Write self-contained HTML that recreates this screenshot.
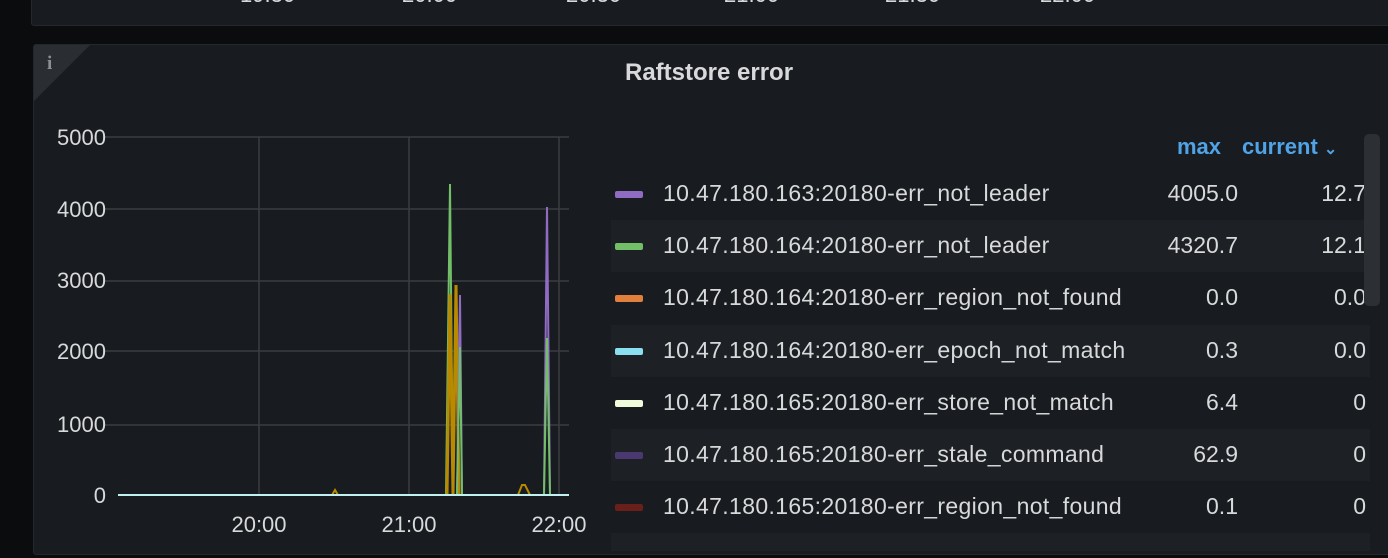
<!DOCTYPE html>
<html><head><meta charset="utf-8"><style>
*{margin:0;padding:0;box-sizing:border-box}
html,body{width:1388px;height:558px;overflow:hidden}
body{background:#0b0c0e;position:relative;font-family:"Liberation Sans",sans-serif;color:#ccccdc}
.p{position:absolute;background:#181b1f;border:1px solid #24272c;border-radius:3px}
.t{position:absolute;font-size:22px;color:#d8d9da}
.row{position:absolute;left:611px;width:759px;height:52px}
.row .sw{position:absolute;left:4px;top:23px;width:28px;height:7px;border-radius:2px}
.row .n{position:absolute;left:52px;top:12px;font-size:23px;letter-spacing:0.35px;color:#d8d9da;white-space:nowrap}
.row .m{position:absolute;right:132px;top:12px;font-size:23px;color:#d8d9da}
.row .c{position:absolute;right:4px;top:12px;font-size:23px;color:#d8d9da}
.alt{background:#1d2024}
</style></head><body>
<div class="p" style="left:31px;top:-10px;width:1362px;height:36px;overflow:hidden">
<span class="t" style="left:208px;top:-9px">19:30</span>
<span class="t" style="left:370px;top:-9px">20:00</span>
<span class="t" style="left:534px;top:-9px">20:30</span>
<span class="t" style="left:692px;top:-9px">21:00</span>
<span class="t" style="left:853px;top:-9px">21:30</span>
<span class="t" style="left:1008px;top:-9px">22:00</span>
</div>
<div class="p" style="left:33px;top:44px;width:1360px;height:511px;overflow:hidden">
<div style="position:absolute;left:0;top:0;width:0;height:0;border-top:56px solid #2a2d32;border-right:56px solid transparent"></div>
<div style="position:absolute;left:13px;top:8px;font-size:19px;font-weight:bold;color:#8e8e93;font-family:'Liberation Serif',serif">i</div>
<div style="position:absolute;left:591px;top:14px;font-size:24px;font-weight:bold;color:#d8d9da">Raftstore error</div>
</div>
<svg style="position:absolute;left:0;top:0" width="1388" height="558">
<g stroke="#3a3c40" stroke-width="1.5">
<line x1="104" y1="137" x2="569" y2="137"/><line x1="104" y1="209" x2="569" y2="209"/>
<line x1="104" y1="281" x2="569" y2="281"/><line x1="104" y1="351" x2="569" y2="351"/>
<line x1="104" y1="425" x2="569" y2="425"/>
<line x1="259" y1="137" x2="259" y2="495"/><line x1="409" y1="137" x2="409" y2="495"/><line x1="559" y1="137" x2="559" y2="495"/>
</g>
<g fill="none" stroke-width="2">
<path d="M446 495 L450 184 L453 495" stroke="#73bf69"/>
<path d="M447 495 L450 294 L453 495" stroke="#b88a00" stroke-width="3"/>
<path d="M453 495 L456 285 L459 495" stroke="#b88a00" stroke-width="3"/>
<path d="M457 495 L460 295 L462 495" stroke="#8f6bc4"/>
<path d="M457 495 L460 347 L462 495" stroke="#73bf69"/>
<path d="M544 495 L547 207 L550 495" stroke="#8f6bc4"/>
<path d="M544 495 L547 338 L550 495" stroke="#73bf69"/>
<path d="M518 495 L522 485 L525 485 L530 495" stroke="#b88a00"/>
<path d="M332 495 L335 490 L338 495" stroke="#b88a00"/>
</g>
<line x1="118" y1="495" x2="569" y2="495" stroke="#c0f0f0" stroke-width="2"/>
<g font-size="22" fill="#d8d9da" font-family="Liberation Sans" text-anchor="end">
<text x="106" y="145">5000</text><text x="106" y="217">4000</text><text x="106" y="288">3000</text>
<text x="106" y="359">2000</text><text x="106" y="432">1000</text><text x="106" y="503">0</text>
</g>
<g font-size="22" fill="#d8d9da" font-family="Liberation Sans" text-anchor="middle">
<text x="259" y="532">20:00</text><text x="409" y="532">21:00</text><text x="559" y="532">22:00</text>
</g>
</svg>
<div style="position:absolute;left:1177px;top:134px;font-size:22px;color:#4fa3e6;font-weight:bold">max</div>
<div style="position:absolute;left:1242px;top:134px;font-size:22px;color:#4fa3e6;font-weight:bold">current <span style="font-size:16px">&#8964;</span></div>
<div class="row" style="top:168px"><div class="sw" style="background:#8f6bc4"></div><span class="n">10.47.180.163:20180-err_not_leader</span><span class="m">4005.0</span><span class="c">12.7</span></div>
<div class="row alt" style="top:220px"><div class="sw" style="background:#73bf69"></div><span class="n">10.47.180.164:20180-err_not_leader</span><span class="m">4320.7</span><span class="c">12.1</span></div>
<div class="row" style="top:272px"><div class="sw" style="background:#e0803c"></div><span class="n">10.47.180.164:20180-err_region_not_found</span><span class="m">0.0</span><span class="c">0.0</span></div>
<div class="row alt" style="top:325px"><div class="sw" style="background:#8ae0f0"></div><span class="n">10.47.180.164:20180-err_epoch_not_match</span><span class="m">0.3</span><span class="c">0.0</span></div>
<div class="row" style="top:377px"><div class="sw" style="background:#f0fadc"></div><span class="n">10.47.180.165:20180-err_store_not_match</span><span class="m">6.4</span><span class="c">0</span></div>
<div class="row alt" style="top:429px"><div class="sw" style="background:#4a3870"></div><span class="n">10.47.180.165:20180-err_stale_command</span><span class="m">62.9</span><span class="c">0</span></div>
<div class="row" style="top:481px"><div class="sw" style="background:#6a1f1a"></div><span class="n">10.47.180.165:20180-err_region_not_found</span><span class="m">0.1</span><span class="c">0</span></div>
<div class="row alt" style="top:533px;height:18px"></div>
<div style="position:absolute;left:1364px;top:134px;width:16px;height:172px;background:#2c2f33;border-radius:5px"></div>
</body></html>
